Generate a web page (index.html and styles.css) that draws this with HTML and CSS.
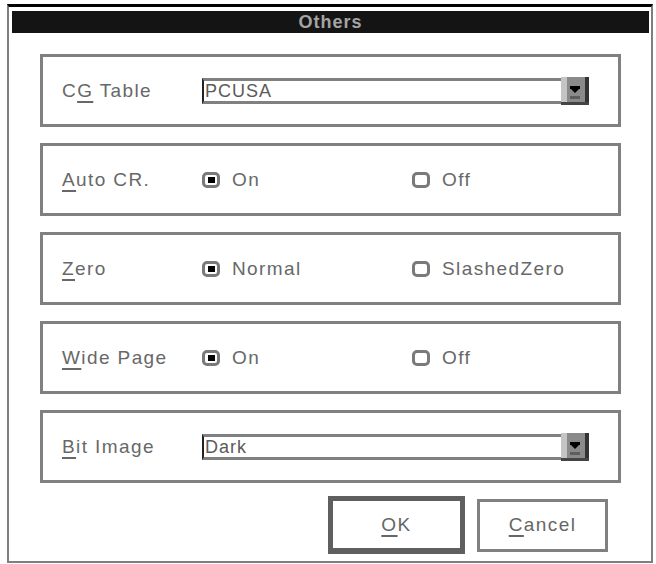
FILE: index.html
```html
<!DOCTYPE html>
<html>
<head>
<meta charset="utf-8">
<link rel="stylesheet" href="styles.css">
</head>
<body>
<div class="dialog">
  <div class="titlebar">Others</div>
  <div class="content">
    <div class="group">
      <span class="label">C<u>G</u> Table</span>
      <div class="combo">
        <div class="field">PCUSA</div>
        <svg class="drop" width="28" height="28" viewBox="0 0 28 28">
          <rect x="0" y="0" width="28" height="28" fill="#8a8a8a"/>
          <rect x="0" y="0" width="6" height="28" fill="#c4c4c4"/>
          <rect x="24" y="0" width="4" height="28" fill="#333"/>
          <rect x="0" y="25" width="28" height="3" fill="#444"/>
          <rect x="9" y="9" width="10" height="3" fill="#000"/>
          <polygon points="10,12 18,12 14,16" fill="#000"/>
          <rect x="9" y="19" width="10" height="3" fill="#5e5e5e"/>
        </svg>
      </div>
    </div>
    <div class="group">
      <span class="label"><u>A</u>uto CR.</span>
      <div class="opts">
        <span class="opt"><span class="radio on"></span>On</span>
        <span class="opt"><span class="radio"></span>Off</span>
      </div>
    </div>
    <div class="group">
      <span class="label"><u>Z</u>ero</span>
      <div class="opts">
        <span class="opt"><span class="radio on"></span>Normal</span>
        <span class="opt"><span class="radio"></span>SlashedZero</span>
      </div>
    </div>
    <div class="group">
      <span class="label"><u>W</u>ide Page</span>
      <div class="opts">
        <span class="opt"><span class="radio on"></span>On</span>
        <span class="opt"><span class="radio"></span>Off</span>
      </div>
    </div>
    <div class="group">
      <span class="label"><u>B</u>it Image</span>
      <div class="combo">
        <div class="field">Dark</div>
        <svg class="drop" width="28" height="28" viewBox="0 0 28 28">
          <rect x="0" y="0" width="28" height="28" fill="#8a8a8a"/>
          <rect x="0" y="0" width="6" height="28" fill="#c4c4c4"/>
          <rect x="24" y="0" width="4" height="28" fill="#333"/>
          <rect x="0" y="25" width="28" height="3" fill="#444"/>
          <rect x="9" y="9" width="10" height="3" fill="#000"/>
          <polygon points="10,12 18,12 14,16" fill="#000"/>
          <rect x="9" y="19" width="10" height="3" fill="#5e5e5e"/>
        </svg>
      </div>
    </div>
    <div class="buttons">
      <div class="btn default"><u>O</u>K</div>
      <div class="btn"><u>C</u>ancel</div>
    </div>
  </div>
</div>
</body>
</html>
```
FILE: styles.css
```css
html, body {
  margin: 0;
  padding: 0;
  background: #ffffff;
}
body {
  font-family: "Liberation Sans", Arial, sans-serif;
  font-size: 19px;
  letter-spacing: 1.4px;
  color: #686868;
}
.dialog {
  box-sizing: border-box;
  margin: 4px 0 0 7px;
  width: 646px;
  height: 559px;
  border-top: 3px solid #000;
  border-left: 2px solid #7f7f7f;
  border-right: 2px solid #7f7f7f;
  border-bottom: 2px solid #7f7f7f;
  display: flex;
  flex-direction: column;
}
.titlebar {
  margin: 4px 2px 0 3px;
  height: 22px;
  line-height: 22px;
  background: #141414;
  color: #a4a4a4;
  text-align: center;
  font-weight: bold;
  font-size: 18px;
  letter-spacing: 1px;
}
.content {
  margin: 21px 0 0 31px;
  width: 581px;
  display: flex;
  flex-direction: column;
  gap: 16px;
}
.group {
  box-sizing: border-box;
  height: 73px;
  border: 3px solid #808080;
  display: flex;
  align-items: center;
  padding-left: 19px;
}
.group:last-of-type {
  height: 74px;
}
.label {
  width: 140px;
  flex: none;
  white-space: nowrap;
}
u {
  text-decoration: underline;
  text-underline-offset: 4px;
  text-decoration-thickness: 2px;
}
.combo {
  display: flex;
  align-items: center;
  height: 28px;
}
.field {
  box-sizing: border-box;
  width: 359px;
  height: 26px;
  border-top: 3px solid #808080;
  border-bottom: 3px solid #808080;
  border-left: 2px solid #222;
  padding-left: 1px;
  line-height: 20px;
  font-size: 18px;
  letter-spacing: 1px;
  color: #5a5a5a;
}
.drop {
  display: block;
  flex: none;
}
.opts {
  display: flex;
  align-items: center;
}
.opt {
  display: flex;
  align-items: center;
  width: 210px;
  white-space: nowrap;
}
.radio {
  box-sizing: border-box;
  width: 18px;
  height: 16px;
  border: 3px solid #7a7a7a;
  border-radius: 5px;
  margin-right: 12px;
  display: flex;
  align-items: center;
  justify-content: center;
  flex: none;
}
.radio.on::after {
  content: "";
  width: 7px;
  height: 6px;
  background: #000;
}
.buttons {
  display: flex;
  justify-content: flex-end;
  align-items: center;
  gap: 12px;
  margin-top: -3px;
  padding-right: 13px;
}
.btn {
  box-sizing: border-box;
  width: 131px;
  height: 53px;
  border: 3px solid #808080;
  display: flex;
  align-items: center;
  justify-content: center;
  color: #666;
}
.btn.default {
  width: 137px;
  height: 58px;
  border: 5px solid #5f5f5f;
  border-bottom-width: 6px;
}
```
